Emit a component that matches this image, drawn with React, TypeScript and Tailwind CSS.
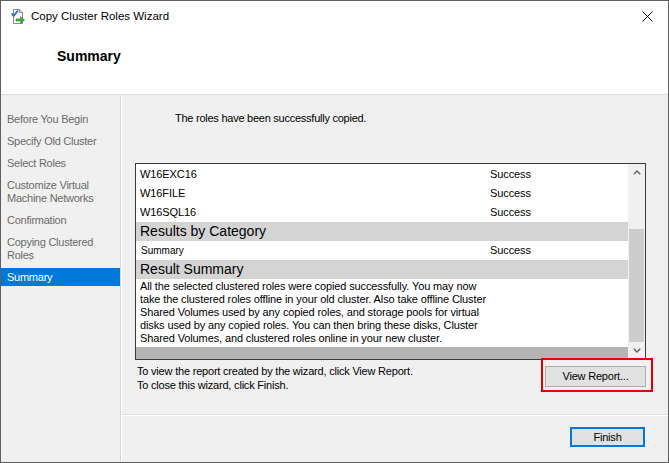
import React from 'react';

const navItems = [
  { label: ['Before You Begin'] },
  { label: ['Specify Old Cluster'] },
  { label: ['Select Roles'] },
  { label: ['Customize Virtual', 'Machine Networks'] },
  { label: ['Confirmation'] },
  { label: ['Copying Clustered', 'Roles'] },
];

const roleRows = ['W16EXC16', 'W16FILE', 'W16SQL16'];

const WizardIcon = () => (
  <svg width="16" height="17" viewBox="0 0 16 17">
    <path d="M3.5 1.5h6l3 3v11h-9z" fill="#fff" stroke="#8a8a8a" />
    <path d="M9.5 1.5v3h3" fill="#e8e8e8" stroke="#8a8a8a" />
    <path d="M1.5 5.5l2.2 2.4L8 2.5" fill="none" stroke="#2a6fc9" strokeWidth="1.8" />
    <path d="M6 11h4.5V8.6l4 3.4-4 3.4V13H6z" fill="#3fae3a" stroke="#2c8a28" strokeWidth="0.6" />
  </svg>
);

const Chevron = ({ down }: { down?: boolean }) => (
  <svg width="8" height="5" viewBox="0 0 8 5" className={down ? 'rotate-180' : ''}>
    <path d="M0.8 4.2L4 1l3.2 3.2" fill="none" stroke="#606060" strokeWidth="1.4" />
  </svg>
);

export default function App() {
  return (
    <div
      className="w-[669px] h-[463px] flex flex-col border border-[#5f5f5f] bg-white text-black overflow-hidden"
      style={{ fontFamily: '"Liberation Sans", Arial, sans-serif' }}
    >
      {/* Title bar */}
      <div className="h-[31px] flex items-center pl-[9px] pr-[10px] shrink-0">
        <WizardIcon />
        <span className="ml-[5px] text-[11.5px] text-black">Copy Cluster Roles Wizard</span>
        <svg width="11" height="11" viewBox="0 0 11 11" className="ml-auto mr-[5px]">
          <path d="M0.5 0.5l10 10M10.5 0.5l-10 10" stroke="#000" strokeWidth="1" />
        </svg>
      </div>

      {/* Header */}
      <div className="h-[63px] pl-[56px] pt-[16px] border-b border-[#dcdcdc] shrink-0">
        <div className="text-[14px] font-bold leading-[17px]">Summary</div>
      </div>

      {/* Body */}
      <div className="flex-1 flex bg-[#f0f0f0] min-h-0">
        {/* Steps */}
        <div className="w-[120px] border-r border-[#d5d5d5] pt-[13px] text-[11px] tracking-[-0.25px] leading-[13px] text-[#6b6b6b]">
          {navItems.map((item) => (
            <div key={item.label[0]} className="pl-[6px] py-[4.5px]">
              {item.label.map((l) => (
                <div key={l}>{l}</div>
              ))}
            </div>
          ))}
          <div className="mt-[2px] h-[18px] bg-[#0078d7] text-white pl-[6px] flex items-center">Summary</div>
        </div>

        {/* Main */}
        <div className="flex-1 flex flex-col border-l border-white">
          <div className="flex-1 flex flex-col pl-[13px] pr-[22px] border-b border-[#e2e2e2]">
            <div className="mt-[16px] pl-[40px] text-[11px] tracking-[-0.25px] leading-[14px]">
              The roles have been successfully copied.
            </div>

            {/* Results list */}
            <div className="mt-[38px] h-[197px] flex border border-[#3a3a3a] bg-white">
              <div className="flex-1 flex flex-col pt-[0.5px]">
                {roleRows.map((r) => (
                  <div key={r} className="h-[19px] flex items-center text-[11px] tracking-[-0.1px]">
                    <span className="w-[354px] pl-[4px]">{r}</span>
                    <span>Success</span>
                  </div>
                ))}
                <div className="h-[19px] flex items-center bg-[#d4d4d4] pl-[4px] text-[14px]">Results by Category</div>
                <div className="h-[19px] flex items-center">
                  <span className="w-[354px] pl-[5px] text-[10px]">Summary</span>
                  <span className="text-[11px] tracking-[-0.1px]">Success</span>
                </div>
                <div className="h-[19px] flex items-center bg-[#d4d4d4] pl-[4px] text-[14px]">Result Summary</div>
                <div className="h-[68px] pl-[4px] pt-[1.5px] text-[11px] tracking-[-0.12px] leading-[13px]">
                  All the selected clustered roles were copied successfully. You may now
                  <br />
                  take the clustered roles offline in your old cluster. Also take offline Cluster
                  <br />
                  Shared Volumes used by any copied roles, and storage pools for virtual
                  <br />
                  disks used by any copied roles. You can then bring these disks, Cluster
                  <br />
                  Shared Volumes, and clustered roles online in your new cluster.
                </div>
                <div className="flex-1 bg-[#b4b4b4]" />
              </div>

              {/* Scrollbar */}
              <div className="w-[17px] flex flex-col bg-[#f0f0f0]">
                <div className="h-[17px] flex items-center justify-center">
                  <Chevron />
                </div>
                <div className="flex-1 flex flex-col px-[1px]">
                  <div className="h-[48px]" />
                  <div className="flex-1 bg-[#cdcdcd]" />
                </div>
                <div className="h-[17px] flex items-center justify-center">
                  <Chevron down />
                </div>
              </div>
            </div>

            <div className="mt-[3px] flex items-start">
              <div className="pl-[2px] pt-[1px] text-[11px] tracking-[-0.2px] leading-[14px]">
                <div>To view the report created by the wizard, click View Report.</div>
                <div>To close this wizard, click Finish.</div>
              </div>
              <div className="ml-auto relative">
                <button className="w-[101px] h-[21px] border border-[#adadad] bg-[#e1e1e1] text-[11px] tracking-[-0.2px]">
                  View Report...
                </button>
                <div className="absolute -left-[4px] -top-[5px] -right-[7px] -bottom-[5px] border-2 border-[#e00000]" />
              </div>
            </div>
          </div>

          {/* Footer */}
          <div className="h-[47px] border-t border-white flex items-start justify-end pt-[11px] pr-[23px] shrink-0">
            <button className="w-[75px] h-[20px] border-2 border-[#0078d7] bg-[#e1e1e1] text-[11px] tracking-[-0.2px] leading-none">
              Finish
            </button>
          </div>
        </div>
      </div>
    </div>
  );
}
